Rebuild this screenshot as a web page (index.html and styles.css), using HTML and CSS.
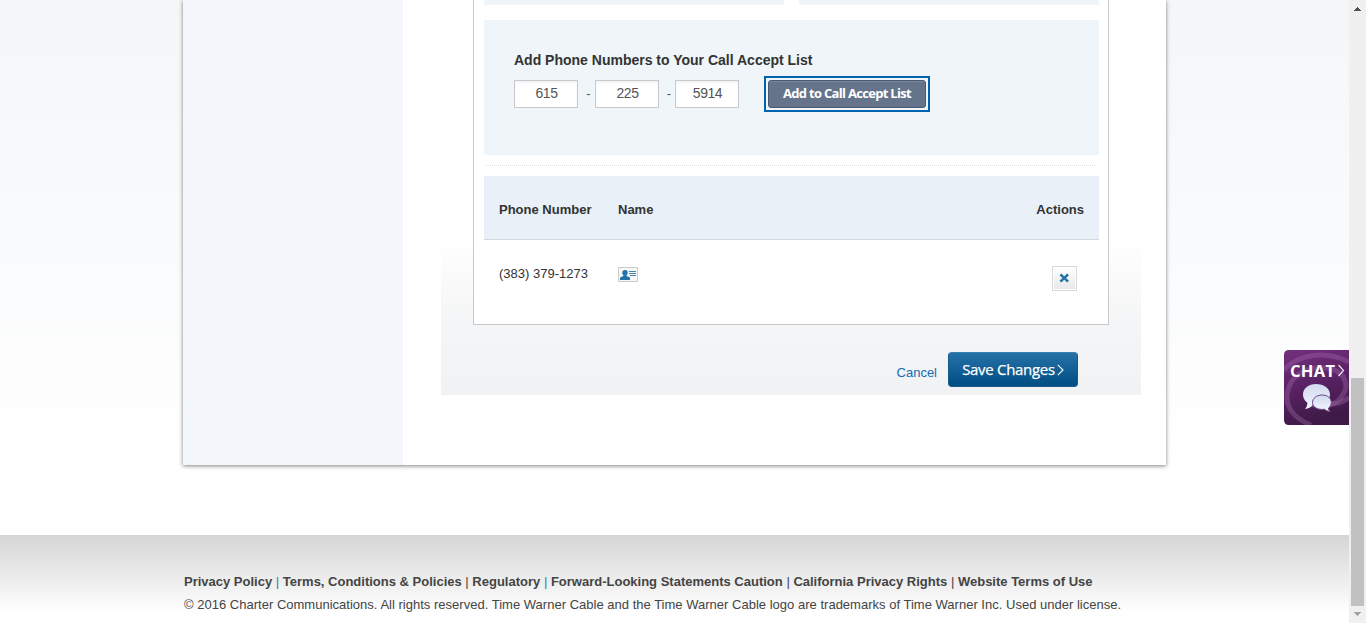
FILE: index.html
```html
<!DOCTYPE html>
<html lang="en">
<head>
<meta charset="utf-8">
<title>Call Accept List</title>
<link rel="stylesheet" href="styles.css">
</head>
<body>
<div class="page">
  <div class="shell">
    <aside class="sidebar"></aside>
    <main class="main">
      <div class="panel">
        <div class="card">
          <div class="options"><div class="option"></div><div class="option"></div></div>
          <section class="add">
            <h3 class="add-title">Add Phone Numbers to Your Call Accept List</h3>
            <div class="add-row">
              <input class="num" value="615"><span class="dash">-</span><input class="num" value="225"><span class="dash">-</span><input class="num" value="5914">
              <span class="focus"><button class="add-btn"><span class="add-label">Add to Call Accept List</span></button></span>
            </div>
          </section>
          <div class="dots"></div>
          <div class="thead"><span class="c-phone">Phone Number</span><span>Name</span><span class="t-actions">Actions</span></div>
          <div class="trow">
            <span class="c-phone">(383) 379-1273</span>
            <svg class="contact" width="20" height="15" viewBox="0 0 20 15"><rect x=".5" y=".5" width="19" height="14" fill="#f7f7f7" stroke="#ccc"/><path d="M7 3c2 0 3 1.200 2.700 3-.1 1-.5 1.700-1.100 2.200v.9l3.400 1.300V13H2v-2.600l3.400-1.300v-.9C4.500 7.500 4.300 6.800 4.300 5.800 4.200 4 5.300 3 7 3z" fill="#2273a9"/><path d="M11 4.500h7M11 6.500h7M12 8.500h6" stroke="#4585ad"/></svg>
            <button class="remove"><svg width="11" height="11" viewBox="0 0 11 11"><path d="M1.400 1.400l7.700 7.200M9.100 1.400L1.400 8.600" stroke="#2273a9" stroke-width="2.600"/></svg></button>
          </div>
        </div>
        <div class="buttons">
          <a class="cancel">Cancel</a>
          <button class="save"><span class="save-label">Save Changes</span><svg width="7" height="12" viewBox="0 0 7 12"><path d="M.8.8L6 6 .8 11.200" fill="none" stroke="#fff" stroke-width="1.100"/></svg></button>
        </div>
      </div>
    </main>
  </div>
  <footer class="footer">
    <div class="links"><b>Privacy Policy</b> <i class="blue">|</i> <b>Terms, Conditions &amp; Policies</b> <i>|</i> <b>Regulatory</b> <i class="blue">|</i> <b>Forward-Looking Statements Caution</b> <i>|</i> <b>California Privacy Rights</b> <i>|</i> <b>Website Terms of Use</b></div>
    <div class="legal">© 2016 Charter Communications. All rights reserved. Time Warner Cable and the Time Warner Cable logo are trademarks of Time Warner Inc. Used under license.</div>
  </footer>
</div>
<div class="scrollbar">
  <svg class="arrow" width="17" height="17" viewBox="0 0 17 17" shape-rendering="crispEdges"><path d="M5 11V10h1V9h1V8h1V7h1v1h1v1h1v1h1v1z" fill="#505050"/></svg>
  <div class="thumb"></div>
  <svg class="arrow" width="17" height="17" viewBox="0 0 17 17" shape-rendering="crispEdges"><path d="M5 6v1h1v1h1v1h1v1h1V9h1V8h1V7h1V6z" fill="#a3a3a3"/></svg>
</div>
<div class="chat">
  <svg width="65" height="75" viewBox="0 0 65 75">
    <defs><linearGradient id="plum" x1="0" y1="0" x2=".25" y2="1"><stop offset="0" stop-color="#74307d"/><stop offset=".5" stop-color="#5b2265"/><stop offset="1" stop-color="#3e1a47"/></linearGradient><linearGradient id="pale" x1="0" y1="0" x2="0" y2="1"><stop offset="0" stop-color="#d2daf0"/><stop offset="1" stop-color="#f1f5fe"/></linearGradient></defs>
    <path d="M5 0H65V75H5Q0 75 0 70V5Q0 0 5 0z" fill="url(#plum)"/>
    <g fill="none" stroke="#a06aa8" stroke-opacity=".38" stroke-width="5"><path d="M0 20C14 4 42 0 65 12"/><path d="M27 75C6 67-1 52 5 37 10 22 31 14 48 19 61 23 66 36 58 46 54 53 45 56 36 56 28 56 21 50 24 43"/><path d="M46 54C55 54 61 51 65 47"/></g>
    <path d="M32 34c8 0 14 4.500 14 10.500S40 55 32 55c-1 0-2 0-3-.3-2 2.500-4.500 4-8 4.300 1.800-1.800 2.400-4 2.200-6.500C20.500 50.500 19 48 19 44.500 19 38.500 24.500 34 32 34z" fill="url(#pale)"/>
    <path d="M38 45c6 0 9.300 3.500 9.300 7.500 0 2.500-1 4.300-2.800 5.500 0 1.500.5 2.500 1.700 3.500-2.700-.2-4.500-1-5.700-2.200-7 .8-12-2.300-12-6.800 0-4 4-7.500 9.500-7.500z" fill="url(#pale)" stroke="#6d4580" stroke-width="1"/>
    <text class="chat-text" x="6" y="26.500" textLength="45">CHAT</text>
    <path d="M54.500 15l5 5.500-5 5.500" fill="none" stroke="#eee5f1" stroke-width="1.200"/>
  </svg>
</div>
</body>
</html>
```
FILE: styles.css
```css
* { box-sizing: border-box; }
body { margin: 0; width: 1366px; height: 623px; overflow: hidden; display: flex; font: 13px/16px "Liberation Sans", Arial, sans-serif; color: #333; background: #fff; }
.page { width: 1349px; height: 623px; background: linear-gradient(#f5f6f8, #f7f9fb 150px, #fff 460px); }
.shell { width: 983px; height: 465px; margin-left: 183px; display: flex; background: #fff; box-shadow: 0 1px 4px rgba(0,0,0,.5); }
.sidebar { width: 220px; background: #f3f7fb; }
.main { padding-left: 38px; }
.panel { width: 700px; height: 395px; background: linear-gradient(#fff 235px, #f4f5f6 325px, #f1f2f4); }
.card { width: 636px; height: 325px; margin-left: 32px; padding: 0 9px 0 10px; background: #fff; border: 1px solid #c8c9cc; border-top: 0; }
.options { display: flex; gap: 15px; height: 5px; margin-bottom: 15px; }
.option { flex: 1; background: #f0f5f9; }
.add { height: 135px; padding: 32px 30px 0; background: #eff5f8; }
.add-title { margin: 0; font-size: 14px; line-height: 17px; white-space: nowrap; }
.add-row { display: flex; margin-top: 7px; align-items: center; height: 36px; }
.num { width: 64px; height: 28px; padding: 0 0 2px 1px; border: 1px solid #c8c9cc; background: #fff; text-align: center; color: #555; font: 14px "Liberation Sans", Arial, sans-serif; letter-spacing: -.45px; box-shadow: inset 0 2px 2px #f3f3f3; }
.dash { width: 17px; padding-left: 4px; text-align: center; color: #555; }
.dash + .num + .dash { width: 16px; }
.focus { width: 166px; height: 36px; margin-left: 25px; padding: 2px; border: 2px solid #0063ae; }
button { font-family: inherit; padding: 0; cursor: pointer; }
.add-btn { display: block; width: 158px; height: 28px; padding-bottom: 2px; border: 1px solid #4c5a70; border-radius: 3px; background: #65738b; box-shadow: inset 0 1px #7b879b; color: #fff; font: bold 13px/24px "Open Sans", sans-serif; letter-spacing: -.7px; white-space: nowrap; }
.dots { height: 1px; margin: 10px 3px 10px 2px; background: repeating-linear-gradient(90deg, #dcdcdc 0 1px, #fff 1px 2px); }
.thead { height: 64px; padding: 4px 15px 0; display: flex; align-items: center; background: #e9f0f8; border-bottom: 1px solid #d5d9de; font-weight: bold; }
.c-phone { width: 119px; }
.t-actions { margin-left: auto; }
.trow { display: flex; align-items: flex-start; padding: 26px 22px 0 15px; }
.contact { margin-top: 1px; }
.remove { width: 25px; height: 25px; margin-left: auto; border: 1px solid #d8d8d8; background: linear-gradient(#fff, #e8e8e8); box-shadow: inset 0 0 0 1px #fff; display: flex; align-items: center; justify-content: center; }
.buttons { display: flex; justify-content: flex-end; padding: 27px 63px 0 0; }
.cancel { margin: 13px 11px 0 0; color: #126bb1; }
.save { width: 130px; height: 35px; display: flex; gap: 2px; align-items: center; justify-content: center; border: 1px solid #145a8c; border-top-color: #367cad; border-radius: 4px; color: #fff; background: linear-gradient(#2571a8, #004d83); font: 15px/20px "Open Sans", sans-serif; letter-spacing: -.3px; white-space: nowrap; }
.save-label { padding-bottom: 2px; -webkit-text-stroke: .25px #fff; }
.footer { height: 88px; margin-top: 70px; padding: 39px 0 0 184px; background: linear-gradient(#d5d5d5, #fff 78px); white-space: nowrap; color: #444; }
.links { margin-bottom: 7px; }
.links i { font-style: normal; }
.links .blue { color: #2b7fbd; }
.legal { letter-spacing: .013px; }
.scrollbar { width: 17px; height: 623px; background: #f0f0f0; display: flex; flex-direction: column; }
.arrow { display: block; }
.thumb { width: 13px; height: 228px; margin: auto 2px 0; background: #c1c1c1; }
.chat { position: absolute; left: 1284px; top: 350px; width: 65px; height: 75px; }
.chat svg { display: block; }
.chat-text { font: bold 16.5px "Open Sans", sans-serif; fill: #fff; }
```
